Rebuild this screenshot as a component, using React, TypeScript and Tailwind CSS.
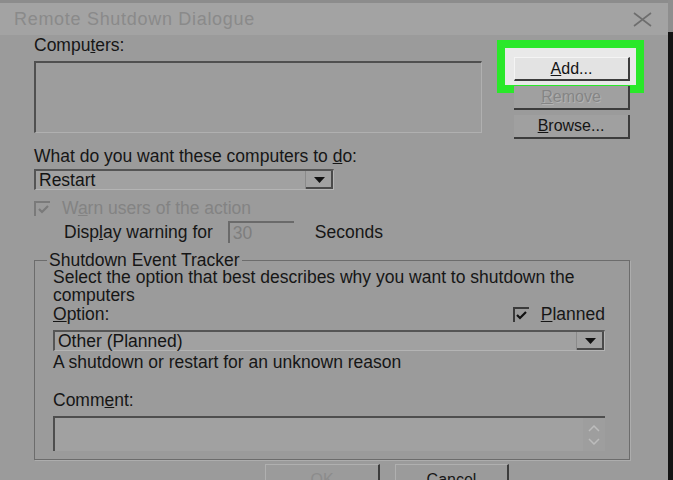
const font = { fontFamily: '"Liberation Sans", Arial, sans-serif' };

const Arrow = () => (
  <div className="w-[28px] h-full flex items-center justify-center bg-[#a2a2a2] border-l border-[#8a8a8a] shadow-[inset_-2px_-2px_0_#4a4a4a]">
    <svg width="11" height="6" viewBox="0 0 11 6">
      <path d="M0 0 L11 0 L5.5 6 Z" fill="#111" />
    </svg>
  </div>
);

const Select = ({ value, w }: { value: string; w: string }) => (
  <div
    className={`${w} h-[21px] flex items-stretch bg-[#a1a1a1] border-t-2 border-l-2 border-[#555] border-b border-r border-b-[#b4b4b4] border-r-[#b4b4b4]`}
  >
    <div className="flex-1 pl-[3px] leading-[18px] text-[#141414]">{value}</div>
    <Arrow />
  </div>
);

const Check = ({ dim }: { dim?: boolean }) => (
  <div
    className={`w-[16px] h-[15px] shrink-0 border-t-2 border-l-2 flex items-center justify-center ${
      dim ? "border-[#7a7a7a]" : "border-[#3a3a3a]"
    }`}
  >
    <svg width="11" height="9" viewBox="0 0 11 9">
      <path
        d="M1 4 L4 7 L10 1"
        fill="none"
        stroke={dim ? "#7a7a7a" : "#111"}
        strokeWidth="2.2"
      />
    </svg>
  </div>
);

const Btn = ({
  children,
  dim,
  light,
}: {
  children: React.ReactNode;
  dim?: boolean;
  light?: boolean;
}) => (
  <div
    className={`relative z-10 w-[116px] h-[24px] flex items-center justify-center text-[16px] border-b-2 border-r-2 border-[#3c3c3c] ${
      light ? "bg-[#e3e3e3] border-t border-l border-t-[#f4f4f4] border-l-[#f4f4f4]" : "bg-[#a0a0a0]"
    } ${dim ? "text-[#858585]" : "text-[#141414]"}`}
  >
    {children}
  </div>
);

export default function App() {
  return (
    <div
      className="w-[673px] h-[480px] overflow-hidden flex bg-[#141414] text-[17.5px]"
      style={font}
    >
      <div className="w-[668px] h-full flex flex-col bg-[#9b9b9b]">
        <div className="h-[35px] shrink-0 flex items-center justify-between bg-[#a3a3a3] border-t-[3px] border-[#8c8c8c] pl-[14px] pr-[16px]">
          <span className="text-[18px] text-[#8a8a8a] tracking-[0.7px]">
            Remote Shutdown Dialogue
          </span>
          <svg width="19" height="15" viewBox="0 0 19 15">
            <path d="M1 1 L18 14 M18 1 L1 14" stroke="#6e6e6e" strokeWidth="1.6" />
          </svg>
        </div>

        <div className="flex pl-[34px] text-[#161616]">
          <div className="w-[448px] flex flex-col">
            <div className="mt-[2px] leading-[17px]">
              Compu<u>t</u>ers:
            </div>
            <div className="mt-[7px] h-[72px] border-t-2 border-l-2 border-[#505050] border-b border-r border-b-[#b0b0b0] border-r-[#b0b0b0] bg-[#9d9d9d]" />
            <div className="mt-[15px] leading-[17px]">
              What do you want these computers to <u>d</u>o:
            </div>
            <div className="mt-[4px]">
              <Select value="Restart" w="w-[300px]" />
            </div>
            <div className="mt-[10px] h-[17px] flex items-center gap-[12px] text-[#838383] leading-[17px]">
              <Check dim />
              <span>
                W<u>a</u>rn users of the action
              </span>
            </div>
            <div className="mt-[4px] ml-[30px] h-[22px] flex items-center leading-[17px]">
              <span>
                Disp<u>l</u>ay warning for
              </span>
              <div className="ml-[15px] w-[66px] h-[22px] border-t-2 border-l-2 border-[#6a6a6a] pl-[3px] leading-[20px] text-[#7e7e7e]">
                30
              </div>
              <span className="ml-[21px]">Seconds</span>
            </div>
          </div>

          <div className="ml-[32px] mt-[22px] flex flex-col gap-[5px]">
            <div className="relative">
              <div className="absolute -left-[17px] -top-[17px] -right-[14px] -bottom-[12px] border-[8px] border-[#2ae82a] bg-[#e9e9e9]" />
              <Btn light>
                <span>
                  <u>A</u>dd...
                </span>
              </Btn>
            </div>
            <Btn dim>
              <span className="[text-shadow:1px_1px_0_#b3b3b3]">
                <u>R</u>emove
              </span>
            </Btn>
            <Btn>
              <span>
                <u>B</u>rowse...
              </span>
            </Btn>
          </div>
        </div>

        <fieldset className="mt-[9px] ml-[34px] w-[596px] border border-[#6c6c6c] shadow-[1px_1px_0_#adadad] pl-[18px] pr-[24px] pb-[8px] text-[#161616]">
          <legend className="ml-[-6px] px-[2px] leading-[17px]">
            Shutdown Event Tracker
          </legend>
          <div className="leading-[17.5px]">
            Select the option that best describes why you want to shutdown the
            <br />
            computers
          </div>
          <div className="mt-[2px] h-[17px] flex items-center justify-between leading-[17px]">
            <span>
              <u>O</u>ption:
            </span>
            <div className="flex items-center gap-[12px]">
              <Check />
              <span>
                <u>P</u>lanned
              </span>
            </div>
          </div>
          <div className="mt-[7px]">
            <Select value="Other (Planned)" w="w-full" />
          </div>
          <div className="mt-[3px] leading-[17.5px]">
            A shutdown or restart for an unknown reason
          </div>
          <div className="mt-[20px] leading-[17.5px]">
            Comm<u>e</u>nt:
          </div>
          <div className="mt-[7px] h-[35px] flex border-t-2 border-l-2 border-[#4e4e4e] bg-[#a1a1a1]">
            <div className="flex-1" />
            <div className="w-[22px] flex flex-col items-center justify-center gap-[6px] bg-[#9e9e9e]">
              <svg width="12" height="7" viewBox="0 0 12 7">
                <path d="M1 6 L6 1 L11 6" fill="none" stroke="#bcbcbc" strokeWidth="1.5" />
              </svg>
              <svg width="12" height="7" viewBox="0 0 12 7">
                <path d="M1 1 L6 6 L11 1" fill="none" stroke="#bcbcbc" strokeWidth="1.5" />
              </svg>
            </div>
          </div>
        </fieldset>

        <div className="mt-[4px] ml-[265px] flex gap-[15px] text-[16px]">
          <div className="w-[115px] h-[26px] flex items-start justify-center pt-[3px] border-t border-l border-[#b0b0b0] border-r-2 border-r-[#3c3c3c] text-[#8c8c8c]">
            OK
          </div>
          <div className="w-[114px] h-[26px] flex items-start justify-center pt-[3px] border-t border-l border-[#b0b0b0] border-r-2 border-r-[#3c3c3c] text-[#161616]">
            Cancel
          </div>
        </div>
      </div>
      <div className="w-[5px] h-full flex flex-col">
        <div className="h-[32px] bg-[#8e8e8e]" />
      </div>
    </div>
  );
}
